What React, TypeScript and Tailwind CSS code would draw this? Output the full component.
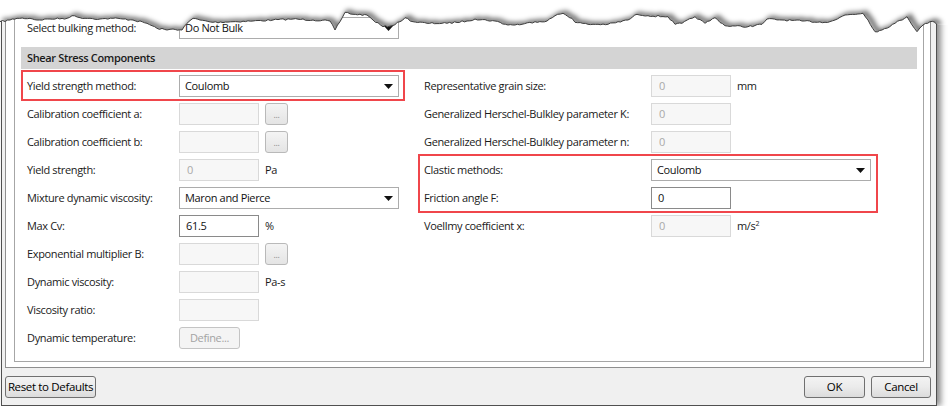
import React from "react";

// torn top edge, traced from the screenshot
const tearPoints: [number, number][] = [
  [0, 21.7], [10, 20], [17, 18.3], [30, 18.3], [37, 20], [50, 19], [67, 18.3], [72, 15.7],
  [80, 17.7], [90, 18.3], [100, 19], [113, 18.3], [123, 19], [133, 20], [147, 23.3],
  [157, 28.3], [167, 30], [173, 29], [182, 30], [187, 23.3], [193, 18.3], [200, 20],
  [213, 22.3], [233, 21.7], [253, 21], [273, 20], [293, 19], [313, 20], [330, 21],
  [335, 30], [340, 21.7], [345, 12.3], [353, 14.3], [367, 15], [373, 20], [383, 26.7],
  [392, 25.7], [400, 21.7], [405, 17.7], [413, 21.7], [427, 23.3], [447, 23.3], [467, 21],
  [475, 19], [495, 21], [508, 25], [522, 24.3], [535, 21.7], [547, 21], [555, 15.7],
  [563, 13.3], [572, 18.3], [575, 22.3], [588, 24.3], [608, 24.3], [628, 20], [637, 14.3],
  [648, 15.7], [668, 16.7], [675, 24.3], [682, 23.3], [695, 16.7], [705, 23.3], [715, 17.7],
  [725, 25.7], [748, 26.7], [762, 24.3], [767, 19], [782, 20], [802, 21], [825, 22.3],
  [835, 20], [845, 15], [863, 13.3], [868, 20], [875, 31.7], [882, 30], [895, 23.3],
  [907, 16.7], [917, 31.7], [923, 25], [930, 21.7], [935, 22.3], [937, 25],
];

function buildTear() {
  let seed = 7;
  const rnd = () => {
    seed = (seed * 16807) % 2147483647;
    return seed / 2147483647 - 0.5;
  };
  const out: [number, number][] = [];
  for (let i = 0; i < tearPoints.length - 1; i++) {
    const [x1, y1] = tearPoints[i];
    const [x2, y2] = tearPoints[i + 1];
    const steps = Math.max(1, Math.round((x2 - x1) / 2.5));
    for (let s = 0; s < steps; s++) {
      const t = s / steps;
      const j = s === 0 ? 0 : rnd() * 1.6;
      out.push([x1 + (x2 - x1) * t, y1 + (y2 - y1) * t + j]);
    }
  }
  out.push(tearPoints[tearPoints.length - 1]);
  return out;
}

const tear = buildTear();
const tearLine = tear.map(([x, y], i) => `${i ? "L" : "M"}${x.toFixed(1)} ${y.toFixed(1)}`).join(" ");
const aboveArea = `M0 0 ${tear.map(([x, y]) => `L${x.toFixed(1)} ${y.toFixed(1)}`).join(" ")} L950 25 L950 0 Z`;

function TornEdge() {
  return (
    <svg className="absolute left-0 top-0" width="950" height="48" viewBox="0 0 950 48">
      <defs>
        <clipPath id="above">
          <path d={aboveArea} />
        </clipPath>
        <filter id="soft" x="-5%" y="-50%" width="110%" height="200%">
          <feGaussianBlur stdDeviation="2.6" />
        </filter>
      </defs>
      <path d={aboveArea} fill="#fff" />
      <g clipPath="url(#above)">
        <path d={tearLine} transform="translate(3 0)" stroke="#000" strokeOpacity="0.6" strokeWidth="5" fill="none" filter="url(#soft)" />
      </g>
      <path d={tearLine} stroke="#3d3d3d" strokeWidth="1" fill="none" />
    </svg>
  );
}

function Combo({ value }: { value: string }) {
  return (
    <div className="h-[22px] w-[220px] border border-[#acacac] bg-white flex items-center justify-between pl-[5px] pr-[5px] text-[#111]">
      <span>{value}</span>
      <svg width="9" height="5" viewBox="0 0 9 5">
        <path d="M0 0H9L4.5 5Z" fill="#111" />
      </svg>
    </div>
  );
}

function Field({ value = "", disabled = false }: { value?: string; disabled?: boolean }) {
  return (
    <div
      className={
        disabled
          ? "h-[22px] w-[80px] border border-[#d9d9d9] bg-[#f7f7f7] text-[#a9a9a9] flex items-center pl-[7px]"
          : "h-[22px] w-[80px] border border-[#8a8a8a] bg-white text-[#111] flex items-center pl-[6px]"
      }
    >
      {value}
    </div>
  );
}

function Dots() {
  return (
    <div className="ml-[6px] h-[22px] w-[23px] rounded-[3px] border border-[#b9b9b9] bg-gradient-to-b from-[#f4f4f4] to-[#e4e4e4] flex items-end justify-center pb-[5px] text-[9px] leading-none text-[#8c8c8c]">
      ...
    </div>
  );
}

function Unit({ children }: { children: React.ReactNode }) {
  return <span className="ml-[6px] text-[#1a1a1a]">{children}</span>;
}

function Row({ label, labelW, children }: { label: string; labelW: string; children?: React.ReactNode }) {
  return (
    <div className="h-[22px] flex items-center">
      <span className={`${labelW} shrink-0 whitespace-nowrap text-[#1a1a1a]`}>{label}</span>
      {children}
    </div>
  );
}

function WinButton({ children, w }: { children: React.ReactNode; w: string }) {
  return (
    <button className={`${w} h-[22px] whitespace-nowrap rounded-[3px] border border-[#707070] bg-gradient-to-b from-[#f3f3f3] via-[#ebebeb] to-[#dcdcdc] text-[11.5px] text-black`}>
      {children}
    </button>
  );
}

export default function App() {
  return (
    <div className="relative w-[950px] h-[406px] bg-white overflow-hidden font-['Open_Sans',sans-serif] text-[11px] tracking-[-0.35px]">
      {/* dialog */}
      <div className="ml-px w-[936px] h-[406px] flex flex-col border-x border-b border-[#505050] bg-[#f0f0f0] pl-[3px] pr-[5px] shadow-[4px_0_6px_rgba(0,0,0,0.45)]">
        <div className="h-[368px] border-x border-b border-[#8f8f8f] bg-white pl-[8px] pr-[6px]">
          <div className="h-[362px] border-x border-b border-[#a6a6a6] px-[6px] pt-[17px]">
            <div className="pl-[6px]">
              <Row label="Select bulking method:" labelW="w-[152px]">
                <Combo value="Do Not Bulk" />
              </Row>
            </div>

            <div className="mt-[8px] h-[22px] bg-[#d4d4d4] flex items-center pl-[6px] font-semibold text-[#1a1a1a]">
              Shear Stress Components
            </div>

            <div className="mt-[6px] pl-[6px] grid grid-cols-[397px_1fr]">
              <div className="flex flex-col gap-[6px]">
                <Row label="Yield strength method:" labelW="w-[152px]">
                  <Combo value="Coulomb" />
                </Row>
                <Row label="Calibration coefficient a:" labelW="w-[152px]">
                  <Field disabled />
                  <Dots />
                </Row>
                <Row label="Calibration coefficient b:" labelW="w-[152px]">
                  <Field disabled />
                  <Dots />
                </Row>
                <Row label="Yield strength:" labelW="w-[152px]">
                  <Field disabled value="0" />
                  <Unit>Pa</Unit>
                </Row>
                <Row label="Mixture dynamic viscosity:" labelW="w-[152px]">
                  <Combo value="Maron and Pierce" />
                </Row>
                <Row label="Max Cv:" labelW="w-[152px]">
                  <Field value="61.5" />
                  <Unit>%</Unit>
                </Row>
                <Row label="Exponential multiplier B:" labelW="w-[152px]">
                  <Field disabled />
                  <Dots />
                </Row>
                <Row label="Dynamic viscosity:" labelW="w-[152px]">
                  <Field disabled />
                  <Unit>Pa-s</Unit>
                </Row>
                <Row label="Viscosity ratio:" labelW="w-[152px]">
                  <Field disabled />
                </Row>
                <Row label="Dynamic temperature:" labelW="w-[152px]">
                  <div className="h-[22px] w-[61px] rounded-[3px] border border-[#c4c4c4] bg-[#f4f4f4] flex items-center justify-center text-[#a3a3a3]">
                    Define...
                  </div>
                </Row>
              </div>

              <div className="flex flex-col gap-[6px]">
                <Row label="Representative grain size:" labelW="w-[227px]">
                  <Field disabled value="0" />
                  <Unit>mm</Unit>
                </Row>
                <Row label="Generalized Herschel-Bulkley parameter K:" labelW="w-[227px]">
                  <Field disabled value="0" />
                </Row>
                <Row label="Generalized Herschel-Bulkley parameter n:" labelW="w-[227px]">
                  <Field disabled value="0" />
                </Row>
                <Row label="Clastic methods:" labelW="w-[227px]">
                  <Combo value="Coulomb" />
                </Row>
                <Row label="Friction angle F:" labelW="w-[227px]">
                  <Field value="0" />
                </Row>
                <Row label="Voellmy coefficient x:" labelW="w-[227px]">
                  <Field disabled value="0" />
                  <Unit>
                    m/s<sup className="text-[7px]">2</sup>
                  </Unit>
                </Row>
              </div>
            </div>
          </div>
        </div>

        <div className="flex items-start justify-between pt-[8px]">
          <WinButton w="w-[91px]">Reset to Defaults</WinButton>
          <div className="flex gap-[6px]">
            <WinButton w="w-[61px]">OK</WinButton>
            <WinButton w="w-[60px]">Cancel</WinButton>
          </div>
        </div>
      </div>

      {/* annotation boxes */}
      <div className="absolute left-[21px] top-[70px] w-[384px] h-[31px] border-2 border-[#f0464b]" />
      <div className="absolute left-[418px] top-[154px] w-[460px] h-[59px] border-2 border-[#f0464b]" />

      <TornEdge />
    </div>
  );
}
